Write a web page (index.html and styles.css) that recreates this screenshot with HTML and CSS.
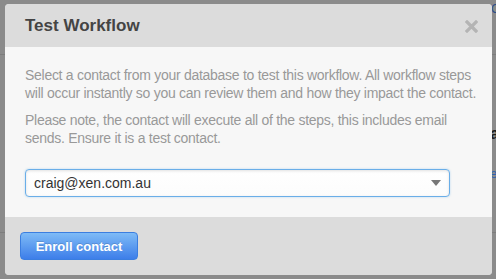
FILE: index.html
```html
<!DOCTYPE html>
<html>
<head>
<meta charset="utf-8">
<link rel="stylesheet" href="styles.css">
</head>
<body>
<div class="page">
  <div class="line line-a"></div>
  <div class="line line-b"></div>
  <span class="peek peek-1">Cr</span>
  <span class="peek peek-2">a</span>
  <span class="peek peek-3">e</span>
</div>
<div class="modal">
  <div class="modal-header">
    <h3 class="title">Test Workflow</h3>
    <svg class="close" width="13" height="13" viewBox="0 0 13 13"><path d="M2 2 L11 11 M11 2 L2 11" stroke="#b4b4b4" stroke-width="3.2" stroke-linecap="square"/></svg>
  </div>
  <div class="modal-body">
    <p class="text">Select a contact from your database to test this workflow. All workflow steps will occur instantly so you can review them and how they impact the contact.</p>
    <p class="text">Please note, the contact will execute all of the steps, this includes email sends. Ensure it is a test contact.</p>
    <div class="select">
      <span class="select-value">craig@xen.com.au</span>
      <span class="caret"></span>
    </div>
  </div>
  <div class="modal-footer">
    <button class="btn">Enroll contact</button>
  </div>
</div>
</body>
</html>
```
FILE: styles.css
```css
html, body {
  margin: 0;
  padding: 0;
}
body {
  width: 496px;
  height: 279px;
  overflow: hidden;
  background: #8b8b8b;
  font-family: "Liberation Sans", Arial, Helvetica, sans-serif;
  position: relative;
}
.page {
  position: absolute;
  inset: 0;
}
.line {
  position: absolute;
  left: 0;
  right: 0;
  height: 1px;
  background: #7d7d7d;
}
.line-a { top: 54px; }
.line-b { top: 232px; }
.peek {
  position: absolute;
  font-size: 14px;
}
.peek-1 { left: 491px; top: 2px; color: #2d4f8a; font-size: 12px; }
.peek-2 { left: 490px; top: 124px; color: #1b1b1b; font-size: 17px; font-weight: bold; }
.peek-3 { left: 490px; top: 166px; color: #2f62b0; font-size: 13px; }
.modal {
  position: absolute;
  left: 5px;
  top: 4px;
  width: 487px;
  height: 271px;
  border-radius: 4px;
  overflow: hidden;
  display: flex;
  flex-direction: column;
  background: #dcdcdc;
}
.modal-header {
  height: 43px;
  background: #dcdcdc;
  display: flex;
  align-items: center;
  justify-content: space-between;
  padding: 0 14px 0 20px;
  box-sizing: border-box;
}
.title {
  margin: 0;
  font-size: 17px;
  font-weight: bold;
  color: #444;
  line-height: 20px;
}
.close {
  display: block;
  margin-top: 1px;
}
.modal-body {
  background: #f7f7f7;
  height: 170px;
  box-sizing: border-box;
  padding: 19px 14px 0 20px;
}
.text {
  margin: 0 0 9px 0;
  font-size: 14px;
  line-height: 18px;
  color: #999;
  letter-spacing: -0.28px;
}
.select {
  margin-top: 22px;
  width: 425px;
  height: 28px;
  box-sizing: border-box;
  border: 1px solid #6aaee8;
  border-radius: 4px;
  background: linear-gradient(#ffffff, #fcfcfc);
  box-shadow: inset 0 1px 3px rgba(0,0,0,0.12), 0 0 2px rgba(102,175,233,0.5);
  display: flex;
  align-items: center;
  justify-content: space-between;
  padding: 0 8px 0 8px;
}
.select-value {
  font-size: 14px;
  color: #333;
}
.caret {
  width: 0;
  height: 0;
  border-left: 5px solid transparent;
  border-right: 5px solid transparent;
  border-top: 6px solid #777;
}
.modal-footer {
  flex: 1;
  background: #dcdcdc;
  padding: 15px 15px 0 15px;
}
.btn {
  display: block;
  width: 118px;
  height: 28px;
  border: 1px solid #3b7ee0;
  border-radius: 4px;
  background: linear-gradient(#7ebbf6, #3d7ee9);
  color: #fff;
  font-family: "Liberation Sans", Arial, sans-serif;
  font-size: 13px;
  font-weight: bold;
  text-shadow: 0 -1px 0 rgba(0,0,0,0.15);
  padding: 0;
}
```
